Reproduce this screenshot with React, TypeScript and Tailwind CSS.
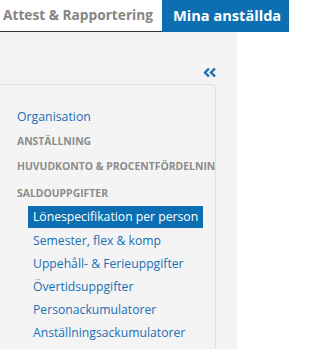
import React from "react";

const font = { fontFamily: '"Open Sans", "Noto Sans", sans-serif' };

const subItems = [
  "Lönespecifikation per person",
  "Semester, flex & komp",
  "Uppehåll- & Ferieuppgifter",
  "Övertidsuppgifter",
  "Personackumulatorer",
  "Anställningsackumulatorer",
];

const App = () => {
  return (
    <div className="w-[289px] h-[349px] bg-white overflow-hidden" style={font}>
      {/* top tabs */}
      <div className="flex h-8">
        <div className="w-[162px] h-8 border-b border-[#333] flex items-center pl-[3px]">
          <span className="whitespace-nowrap text-[13.7px] font-bold text-[#858585]">
            Attest &amp; Rapportering
          </span>
        </div>
        <div className="flex-1 h-8 bg-[#0b6fb1] flex items-center pl-[11px]">
          <span className="whitespace-nowrap text-[14.6px] font-bold text-white">
            Mina anställda
          </span>
        </div>
      </div>

      {/* side panel */}
      <div className="w-[237px] h-[317px] bg-[#f4f4f4] pt-[34px]">
        <div className="flex justify-end pr-[21px] h-[18px]">
          <svg width="13" height="9" viewBox="0 0 13 9" className="mt-[2px]">
            <path
              d="M6 0.5 L2 4.5 L6 8.5 M12 0.5 L8 4.5 L12 8.5"
              fill="none"
              stroke="#1a6fb5"
              strokeWidth="2.4"
            />
          </svg>
        </div>
        <div className="w-[216px] h-[400px] border-t border-r border-[#e0e0e0] rounded-tr-[4px] overflow-hidden pt-[20px]">
          <div className="h-6 flex items-center pl-[17px] text-[12.3px] text-[#1a6fb5] whitespace-nowrap">
            Organisation
          </div>
          {["ANSTÄLLNING", "HUVUDKONTO & PROCENTFÖRDELNING", "SALDOUPPGIFTER"].map((h, i) => (
            <div
              key={h}
              className={
                (i === 2 ? "h-[27px] pt-[2px] " : "h-[25px] ") +
                "flex items-center pl-[17px] text-[10.4px] font-bold text-[#8c8c8c] whitespace-nowrap"
              }
            >
              {h}
            </div>
          ))}
          <div className="pl-[28px]">
            {subItems.map((s, i) => (
              <div key={s} className={i === 0 ? "h-[22px] mb-[2px] flex" : "h-[23px] flex items-center"}>
                <span
                  className={
                    i === 0
                      ? "h-[22px] flex items-center px-[5px] bg-[#0b6fb1] text-white text-[12.2px] whitespace-nowrap"
                      : "px-[5px] text-[12.2px] text-[#1a6fb5] whitespace-nowrap"
                  }
                >
                  {s}
                </span>
              </div>
            ))}
          </div>
        </div>
      </div>
    </div>
  );
};

export default App;
